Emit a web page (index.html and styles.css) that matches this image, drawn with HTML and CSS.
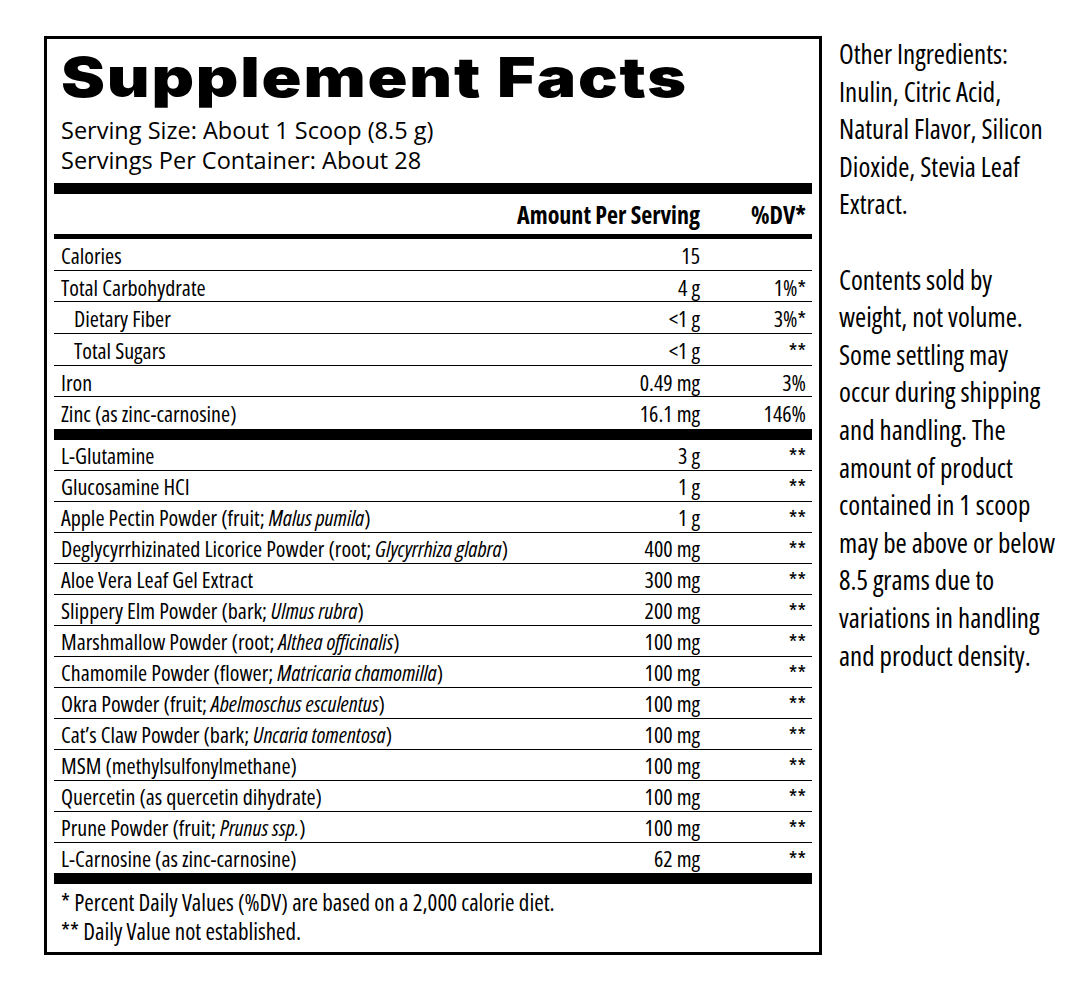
FILE: index.html
```html
<!DOCTYPE html>
<html lang="en">
<head>
<meta charset="utf-8">
<title>Supplement Facts</title>
<link rel="stylesheet" href="styles.css">
</head>
<body>
<div class="page">
  <section class="facts">
    <h1 class="title"><span class="title-text">Supplement Facts</span></h1>
    <p class="serving">Serving Size: About 1 Scoop (8.5 g)</p>
    <p class="serving">Servings Per Container: About 28</p>
    <div class="bar bar-thick bar-top"></div>
    <div class="row row-head">
      <span class="name"></span>
      <span class="amt">Amount Per Serving</span>
      <span class="dv">%DV*</span>
    </div>
    <div class="bar bar-mid"></div>
    <div class="group group-a">
      <div class="row"><span class="name">Calories</span><span class="amt">15</span><span class="dv"></span></div>
      <div class="row"><span class="name">Total Carbohydrate</span><span class="amt">4 g</span><span class="dv">1%*</span></div>
      <div class="row"><span class="name indent">Dietary Fiber</span><span class="amt">&lt;1 g</span><span class="dv">3%*</span></div>
      <div class="row"><span class="name indent">Total Sugars</span><span class="amt">&lt;1 g</span><span class="dv">**</span></div>
      <div class="row"><span class="name">Iron</span><span class="amt">0.49 mg</span><span class="dv">3%</span></div>
      <div class="row"><span class="name">Zinc (as zinc-carnosine)</span><span class="amt">16.1 mg</span><span class="dv">146%</span></div>
    </div>
    <div class="bar bar-thick"></div>
    <div class="group group-b">
      <div class="row"><span class="name">L-Glutamine</span><span class="amt">3 g</span><span class="dv">**</span></div>
      <div class="row"><span class="name">Glucosamine HCI</span><span class="amt">1 g</span><span class="dv">**</span></div>
      <div class="row"><span class="name">Apple Pectin Powder (fruit; <i>Malus pumila</i>)</span><span class="amt">1 g</span><span class="dv">**</span></div>
      <div class="row"><span class="name">Deglycyrrhizinated Licorice Powder (root; <i>Glycyrrhiza glabra</i>)</span><span class="amt">400 mg</span><span class="dv">**</span></div>
      <div class="row"><span class="name">Aloe Vera Leaf Gel Extract</span><span class="amt">300 mg</span><span class="dv">**</span></div>
      <div class="row"><span class="name">Slippery Elm Powder (bark; <i>Ulmus rubra</i>)</span><span class="amt">200 mg</span><span class="dv">**</span></div>
      <div class="row"><span class="name">Marshmallow Powder (root; <i>Althea officinalis</i>)</span><span class="amt">100 mg</span><span class="dv">**</span></div>
      <div class="row"><span class="name">Chamomile Powder (flower; <i>Matricaria chamomilla</i>)</span><span class="amt">100 mg</span><span class="dv">**</span></div>
      <div class="row"><span class="name">Okra Powder (fruit; <i>Abelmoschus esculentus</i>)</span><span class="amt">100 mg</span><span class="dv">**</span></div>
      <div class="row"><span class="name">Cat’s Claw Powder (bark; <i>Uncaria tomentosa</i>)</span><span class="amt">100 mg</span><span class="dv">**</span></div>
      <div class="row"><span class="name">MSM (methylsulfonylmethane)</span><span class="amt">100 mg</span><span class="dv">**</span></div>
      <div class="row"><span class="name">Quercetin (as quercetin dihydrate)</span><span class="amt">100 mg</span><span class="dv">**</span></div>
      <div class="row"><span class="name">Prune Powder (fruit; <i>Prunus ssp.</i>)</span><span class="amt">100 mg</span><span class="dv">**</span></div>
      <div class="row"><span class="name">L-Carnosine (as zinc-carnosine)</span><span class="amt">62 mg</span><span class="dv">**</span></div>
    </div>
    <div class="bar bar-thick"></div>
    <div class="notes">
      <p>* Percent Daily Values (%DV) are based on a 2,000 calorie diet.</p>
      <p>** Daily Value not established.</p>
    </div>
  </section>
  <aside class="side">
    <p class="side-block">Other Ingredients:<br>Inulin, Citric Acid,<br>Natural Flavor, Silicon<br>Dioxide, Stevia Leaf<br>Extract.</p>
    <p class="side-block">Contents sold by<br>weight, not volume.<br>Some settling may<br>occur during shipping<br>and handling. The<br>amount of product<br>contained in 1 scoop<br>may be above or below<br>8.5 grams due to<br>variations in handling<br>and product density.</p>
  </aside>
</div>
</body>
</html>
```

FILE: styles.css
```css
* { box-sizing: border-box; }

html, body {
  margin: 0;
  padding: 0;
  background: #ffffff;
  color: #000000;
}

body {
  font-family: "Open Sans", "Liberation Sans Narrow", "DejaVu Sans Condensed", sans-serif;
  font-stretch: 75%;
}

.page {
  display: flex;
  align-items: flex-start;
  padding: 36px 0 0 44px;
  width: 1080px;
  height: 994px;
}

.facts {
  width: 778px;
  height: 919px;
  border: 3px solid #000;
  padding: 0 7px;
  flex: none;
}

.title {
  margin: 0;
  padding: 4px 0 3px 7px;
  font-family: "Inter", "Lato", sans-serif;
  font-stretch: 100%;
  font-weight: 900;
  font-size: 55px;
  line-height: 69px;
  letter-spacing: 1.5px;
}

.title-text {
  display: inline-block;
  transform: scaleX(1.2);
  transform-origin: left center;
}

.serving {
  margin: 0;
  padding-left: 7px;
  font-stretch: 100%;
  font-size: 23.5px;
  line-height: 30px;
}

.bar { background: #000; }
.bar-top { margin-top: 8px; }
.bar-thick { height: 11px; }
.bar-mid { height: 5px; }

.row {
  display: grid;
  grid-template-columns: 1fr auto 106px;
  align-items: baseline;
  padding: 2px 6px 0 7px;
  font-size: 22px;
  line-height: 27px;
  height: 31px;
  border-bottom: 1px solid #000;
}

.group-a .row {
  height: 31.67px;
  padding-top: 3px;
  line-height: 27.5px;
}

.group .row:last-child { border-bottom: none; }

.group-b .row:last-child { height: 30px; }

.row-head {
  border-bottom: none;
  font-weight: 700;
  font-size: 24px;
  padding-top: 7px;
  height: 40px;
}

.amt, .dv { text-align: right; white-space: nowrap; }
.name { white-space: nowrap; }
.indent { padding-left: 13px; }
.name i { font-style: italic; }

.notes {
  padding: 4px 0 0 7px;
  font-size: 23px;
  line-height: 29px;
}

.notes p { margin: 0; }

.side {
  margin-top: -1px;
  padding: 0 0 0 17px;
  font-size: 27px;
  line-height: 37.6px;
}

.side-block { margin: 0 0 37.6px 0; }
```
